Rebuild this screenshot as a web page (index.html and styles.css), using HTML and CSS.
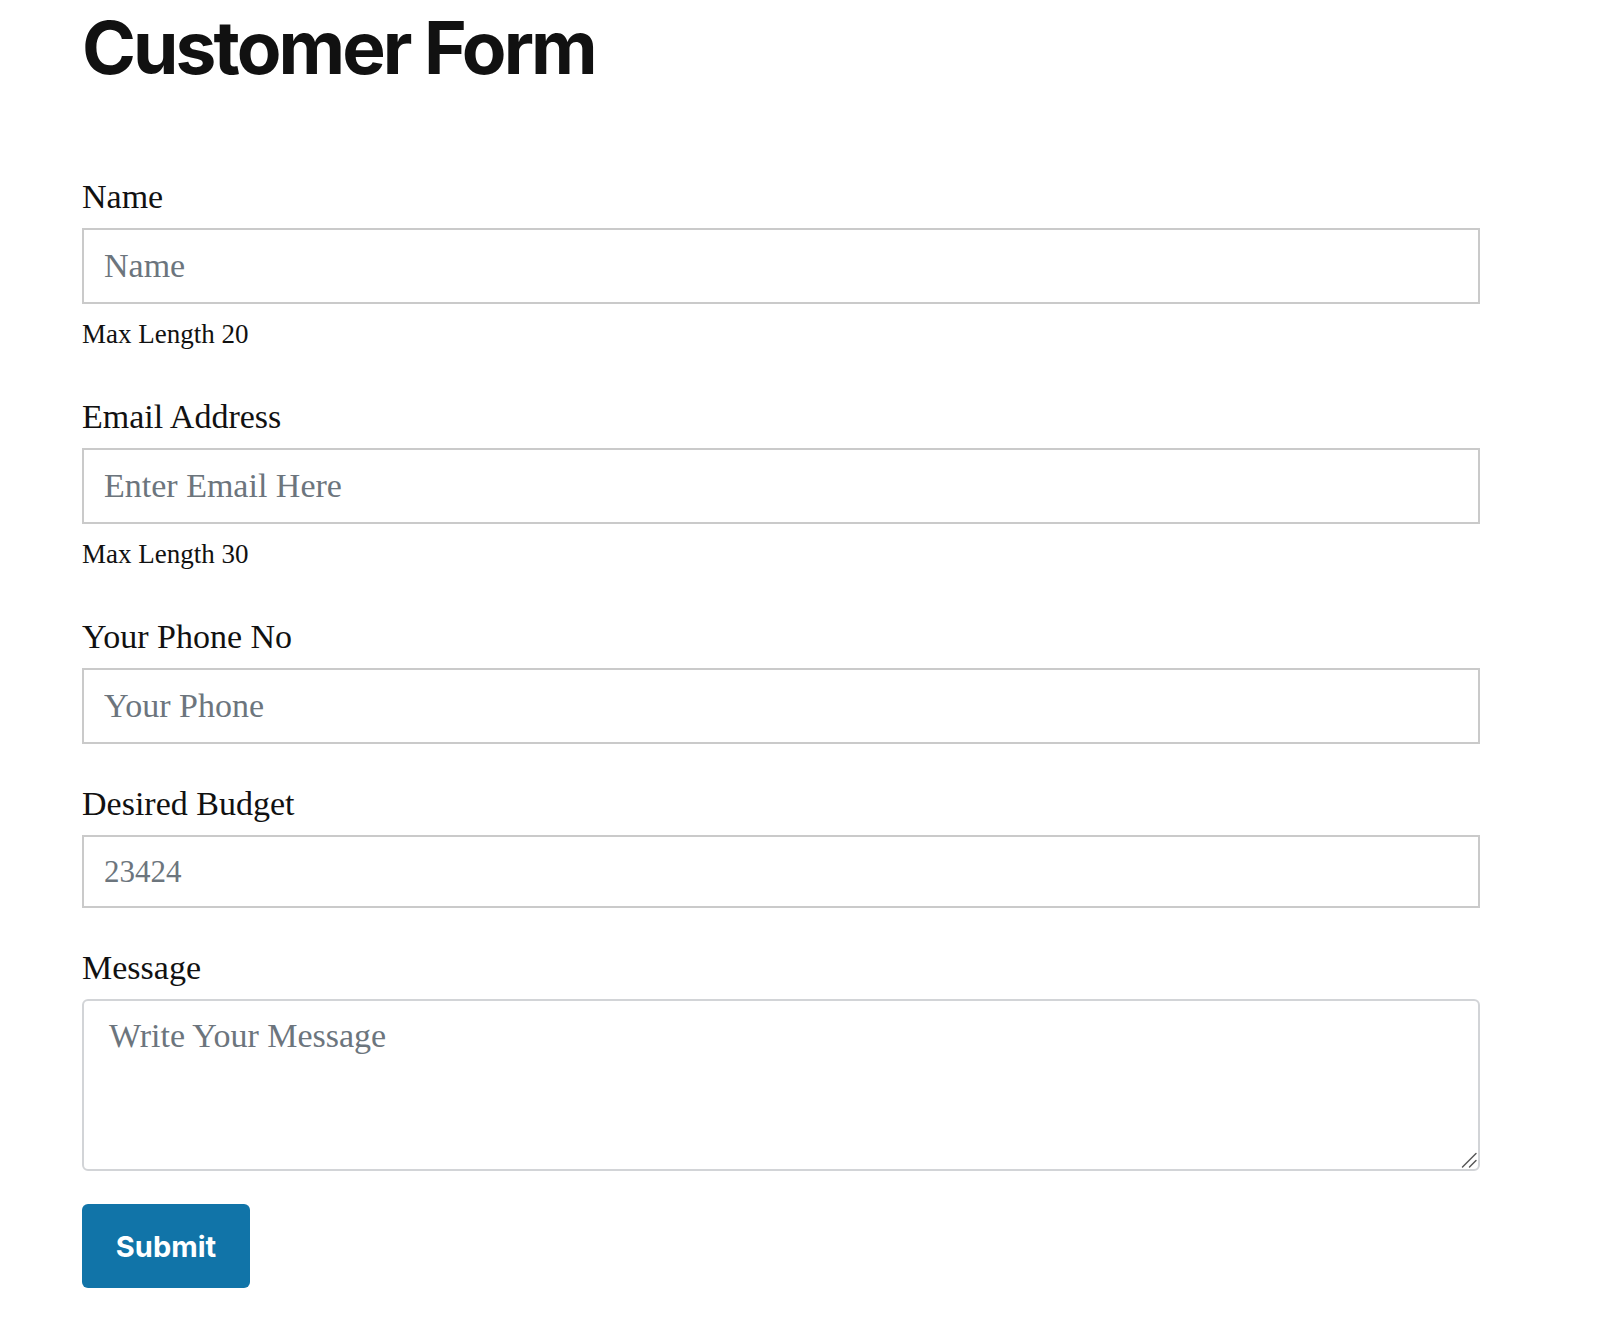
FILE: index.html
```html
<!DOCTYPE html>
<html lang="en">
<head>
<meta charset="utf-8">
<title>Customer Form</title>
<link rel="stylesheet" href="styles.css">
</head>
<body>
<main class="page">
  <h1 class="title">Customer Form</h1>
  <form class="form">
    <div class="field field--help">
      <label class="label" for="name">Name</label>
      <input class="input" id="name" type="text" placeholder="Name" maxlength="20">
      <div class="help">Max Length 20</div>
    </div>
    <div class="field field--help">
      <label class="label" for="email">Email Address</label>
      <input class="input" id="email" type="email" placeholder="Enter Email Here" maxlength="30">
      <div class="help">Max Length 30</div>
    </div>
    <div class="field">
      <label class="label" for="phone">Your Phone No</label>
      <input class="input" id="phone" type="tel" placeholder="Your Phone">
    </div>
    <div class="field">
      <label class="label" for="budget">Desired Budget</label>
      <input class="input input--number" id="budget" type="number" placeholder="23424">
    </div>
    <div class="field field--last">
      <label class="label" for="message">Message</label>
      <div class="textarea-wrap">
        <textarea class="textarea" id="message" placeholder="Write Your Message"></textarea>
        <svg class="resizer" width="16" height="16" viewBox="0 0 16 16" aria-hidden="true">
          <line x1="1.5" y1="15" x2="15" y2="1.5" stroke="#555" stroke-width="1.4" stroke-linecap="round"/>
          <line x1="8.5" y1="15" x2="15" y2="8.5" stroke="#555" stroke-width="1.4" stroke-linecap="round"/>
        </svg>
      </div>
    </div>
    <button class="submit" type="submit">Submit</button>
  </form>
</main>
</body>
</html>
```

FILE: styles.css
```css
html, body {
  margin: 0;
  padding: 0;
  background: #ffffff;
}

.page {
  padding: 0 0 0 82px;
  width: 1398px;
}

.title {
  margin: 11px 0 0 0;
  font-family: Inter, "Liberation Sans", sans-serif;
  font-weight: 700;
  font-size: 73px;
  line-height: 74px;
  letter-spacing: -0.04em;
  color: #111111;
}

.form {
  margin-top: 92px;
  display: flex;
  flex-direction: column;
  align-items: flex-start;
}

.field {
  width: 100%;
  margin-bottom: 40px;
}

.field--last {
  margin-bottom: 33px;
}

.label {
  display: block;
  font-family: "Liberation Serif", "Times New Roman", serif;
  font-size: 34px;
  line-height: 40px;
  color: #111111;
  margin-bottom: 11px;
}

.input {
  display: block;
  box-sizing: border-box;
  width: 100%;
  height: 76px;
  margin: 0;
  padding: 0 20px;
  border: 2px solid #cacaca;
  border-radius: 0;
  background: #ffffff;
  font-family: "Liberation Serif", "Times New Roman", serif;
  font-size: 34px;
  color: #212529;
  outline: none;
}

.input--number {
  height: 73px;
  font-size: 31px;
  -moz-appearance: textfield;
}

.input--number::-webkit-inner-spin-button,
.input--number::-webkit-outer-spin-button {
  -webkit-appearance: none;
  margin: 0;
}

.input::placeholder,
.textarea::placeholder {
  color: #6c757d;
  opacity: 1;
}

.help {
  margin-top: 14px;
  margin-bottom: 7px;
  font-family: "Liberation Serif", "Times New Roman", serif;
  font-size: 27px;
  line-height: 32px;
  color: #111111;
}

.textarea-wrap {
  position: relative;
  width: 100%;
}

.textarea {
  display: block;
  box-sizing: border-box;
  width: 100%;
  height: 172px;
  margin: 0;
  padding: 16px 25px;
  border: 2px solid #d2d4d7;
  border-radius: 6px;
  background: #ffffff;
  font-family: "Liberation Serif", "Times New Roman", serif;
  font-size: 34px;
  line-height: 38px;
  color: #212529;
  resize: none;
  outline: none;
}

.resizer {
  position: absolute;
  right: 3px;
  bottom: 3px;
  pointer-events: none;
}

.submit {
  width: 168px;
  height: 84px;
  padding: 0;
  border: none;
  border-radius: 6px;
  background: #1174a8;
  color: #ffffff;
  font-family: Inter, "Liberation Sans", sans-serif;
  font-weight: 700;
  font-size: 29px;
  cursor: pointer;
}
```
